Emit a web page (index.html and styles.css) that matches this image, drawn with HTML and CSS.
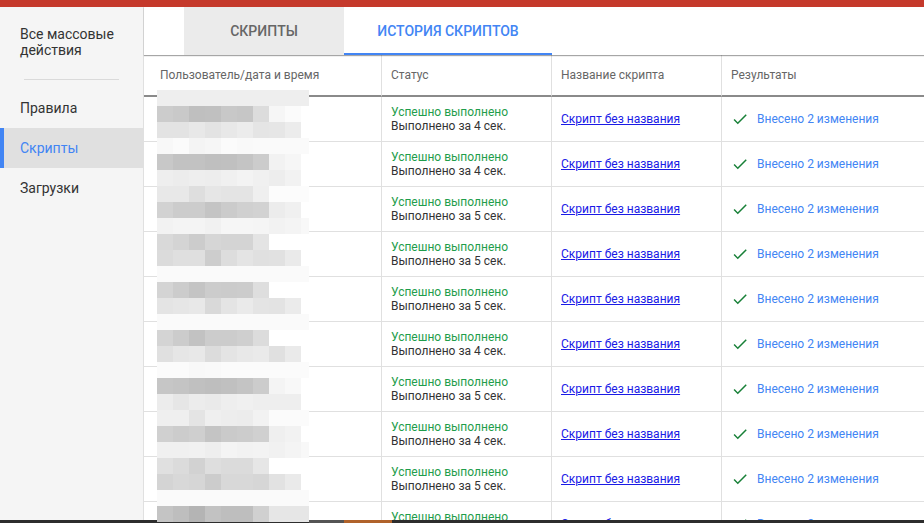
FILE: index.html
```html
<!DOCTYPE html>
<html>
<head>
  <meta charset="utf-8">
  <link rel="stylesheet" href="styles.css">
</head>
<body>
  <div class="topbar"></div>
  <div class="layout">
    <div class="sidebar">
      <div class="side-title">Все массовые<br>действия</div>
      <div class="side-divider"></div>
      <div class="side-item">Правила</div>
      <div class="side-item active">Скрипты</div>
      <div class="side-item">Загрузки</div>
    </div>

    <div class="main">
      <div class="tabs">
        <div class="tab tab-scripts">Скрипты</div>
        <div class="tab tab-history active">История скриптов</div>
      </div>

      <table class="history">
        <thead>
          <tr>
            <th class="col-user">Пользователь/дата и время</th>
            <th class="col-status">Статус</th>
            <th class="col-name">Название скрипта</th>
            <th>Результаты</th>
          </tr>
        </thead>
        <tbody id="historyRows">
          <!-- Rows are added by script.js -->
        </tbody>
      </table>
    </div>
  </div>

  <!-- pixelated user names -->
  <div class="redact" id="redact"></div>

  <div class="taskbar">
    <span class="tb-gray"></span>
    <span class="tb-orange"></span>
  </div>

  <script src="script.js"></script>
</body>
</html>
```

FILE: styles.css
```css
html, body {
  margin: 0;
  height: 523px;
  overflow: hidden;
}
body {
  font-family: Roboto, "Liberation Sans", Arial, sans-serif;
  color: #333;
  background: #fff;
}
.topbar {
  height: 7px;
  background: #c5392b;
}
.layout {
  display: flex;
  height: 516px;
}
/* Sidebar */
.sidebar {
  width: 143px;
  flex-shrink: 0;
  background: #f5f5f5;
  border-right: 1px solid #e0e0e0;
}
.side-title {
  padding: 19px 20px 0;
  font-size: 14px;
  line-height: 16px;
  color: #333;
}
.side-divider {
  height: 1px;
  background: #dadada;
  margin: 21px 24px 8px;
}
.side-item {
  height: 40px;
  line-height: 40px;
  padding-left: 20px;
  font-size: 14px;
  color: #333;
}
.side-item.active {
  background: #e0e0e0;
  color: #4285f4;
  box-shadow: inset 4px 0 0 #4285f4;
}
/* Tabs */
.main {
  flex-grow: 1;
  min-width: 0;
}
.tabs {
  display: flex;
  height: 48px;
  padding-left: 40px;
  position: relative;
  box-shadow: 0 1px 1px rgba(0, 0, 0, 0.35);
}
.tab {
  display: flex;
  align-items: center;
  justify-content: center;
  padding: 0 32px;
  font-size: 14px;
  font-weight: 500;
  text-transform: uppercase;
  color: #666;
  box-sizing: border-box;
}
.tab-scripts {
  width: 160px;
  background: #ebebeb;
}
.tab-history {
  width: 208px;
}
.tab.active {
  color: #4285f4;
  border-bottom: 2px solid #4285f4;
  padding-top: 2px;
}
/* Table */
.history {
  width: 100%;
  table-layout: fixed;
  border-collapse: separate;
  border-spacing: 0;
  font-size: 12px;
}
.history th {
  height: 40px;
  padding: 0 9px;
  text-align: left;
  font-weight: normal;
  color: #666;
  border-bottom: 2px solid #8a8a8a;
  border-left: 1px solid #e0e0e0;
}
.history td {
  height: 44px;
  padding: 0 9px;
  border-bottom: 1px solid #e0e0e0;
  border-left: 1px solid #e0e0e0;
  line-height: 14px;
}
.history th:first-child,
.history td:first-child {
  border-left: none;
  padding-left: 16px;
}
.col-user {
  width: 237px;
  box-sizing: border-box;
}
.col-status,
.col-name {
  width: 170px;
  box-sizing: border-box;
}
.ok {
  color: #1f9d4b;
}
.time {
  color: #333;
}
.history a {
  color: #1a1ae6;
}
.result {
  display: flex;
  align-items: center;
  color: #4285f4;
}
.check {
  width: 18px;
  height: 18px;
  margin-right: 8px;
  fill: #188038;
}
/* Pixelated names and bottom strip lie over the table */
.redact {
  position: absolute;
  left: 157px;
  top: 90px;
  display: grid;
  grid-template-columns: repeat(9, 16px) 8px;
  grid-auto-rows: 16px;
  z-index: 3;
}
.taskbar {
  position: fixed;
  left: 0;
  right: 0;
  bottom: 0;
  height: 3px;
  display: flex;
  padding-left: 309px;
  background: #2d2d2d;
  z-index: 2;
}
.tb-gray {
  width: 35px;
  background: #545454;
}
.tb-orange {
  width: 48px;
  background: #b0622a;
}
```

FILE: script.js
```js
var durations = [4, 4, 5, 5, 5, 4, 5, 4, 5, 5];
var body = document.getElementById('historyRows');

durations.forEach(function (sec) {
  var tr = document.createElement('tr');
  tr.innerHTML =
    '<td></td>' +
    '<td><div class="ok">Успешно выполнено</div>' +
    '<div class="time">Выполнено за ' + sec + ' сек.</div></td>' +
    '<td><a href="#">Скрипт без названия</a></td>' +
    '<td><div class="result">' +
    '<svg class="check" viewBox="0 0 24 24"><path d="M9 16.2L4.8 12l-1.4 1.4L9 19 21 7l-1.4-1.4L9 16.2z"/></svg>' +
    'Внесено 2 изменения</div></td>';
  body.appendChild(tr);
});

// grey levels of the blurred user column, one string per 16px line
var pixels = [
  'ee ee ee ee ee ee ee ee ee ee',
  'cc c9 bf c0 c8 c6 dc f6 fb ..',
  'e3 e3 e8 e3 e8 ec e5 e6 ec ..',
  'f8 fb f4 f6 fb f9 fa fa fa fa',
  'c8 c2 c2 bf c0 c4 cc f2 f6 ..',
  'ee ec ee ed f0 f3 f0 ed f2 ..',
  'e8 e8 de e6 e4 e4 ef fc fc fc',
  'd2 cc cc c4 cb d0 d2 ec f0 ..',
  'f2 f4 f4 f1 f6 f6 f5 f2 f4 f8',
  'd9 d4 cc d6 d4 d4 e4 .. .. ..',
  'db df df cd dd e4 e0 e1 ea ..',
  'fa fa fa fa fa fa fa fa fa fa',
  'd4 cc c4 cc cb cc de .. .. ..',
  'e4 e6 e8 d9 e4 ea e4 e3 eb ..',
  'fa fa fa fa fa fa fa fa fa fa',
  'd4 cc c2 cc cc cf dc .. .. ..',
  'e0 e6 e8 dc e4 e8 ea e0 ea ..',
  'fb fb f8 f9 fb fb fb fb fb fb',
  'c6 c4 c0 be c0 c4 cc f4 f8 ..',
  'ec e6 ec ea ee f0 ee ee ee ..',
  'ef ef e4 ef ed ec f2 fb fb fb',
  'd0 cc cf c4 ca cc d0 ef f2 ..',
  'f0 f0 f1 ee f4 f2 f3 f1 f4 f8',
  'e0 db d2 de db db e6 .. .. ..',
  'd4 d8 d6 cc d8 d8 d6 e2 ea ..',
  'fa fa fa fa fa fa fa fa fa fa',
  'c4 be b4 c2 be be d0 e6 e6 e6'
];
var redact = document.getElementById('redact');

pixels.forEach(function (line) {
  line.split(' ').forEach(function (v) {
    var cell = document.createElement('span');
    cell.style.background = v === '..' ? '#fff' : '#' + v + v + v;
    redact.appendChild(cell);
  });
});
```
